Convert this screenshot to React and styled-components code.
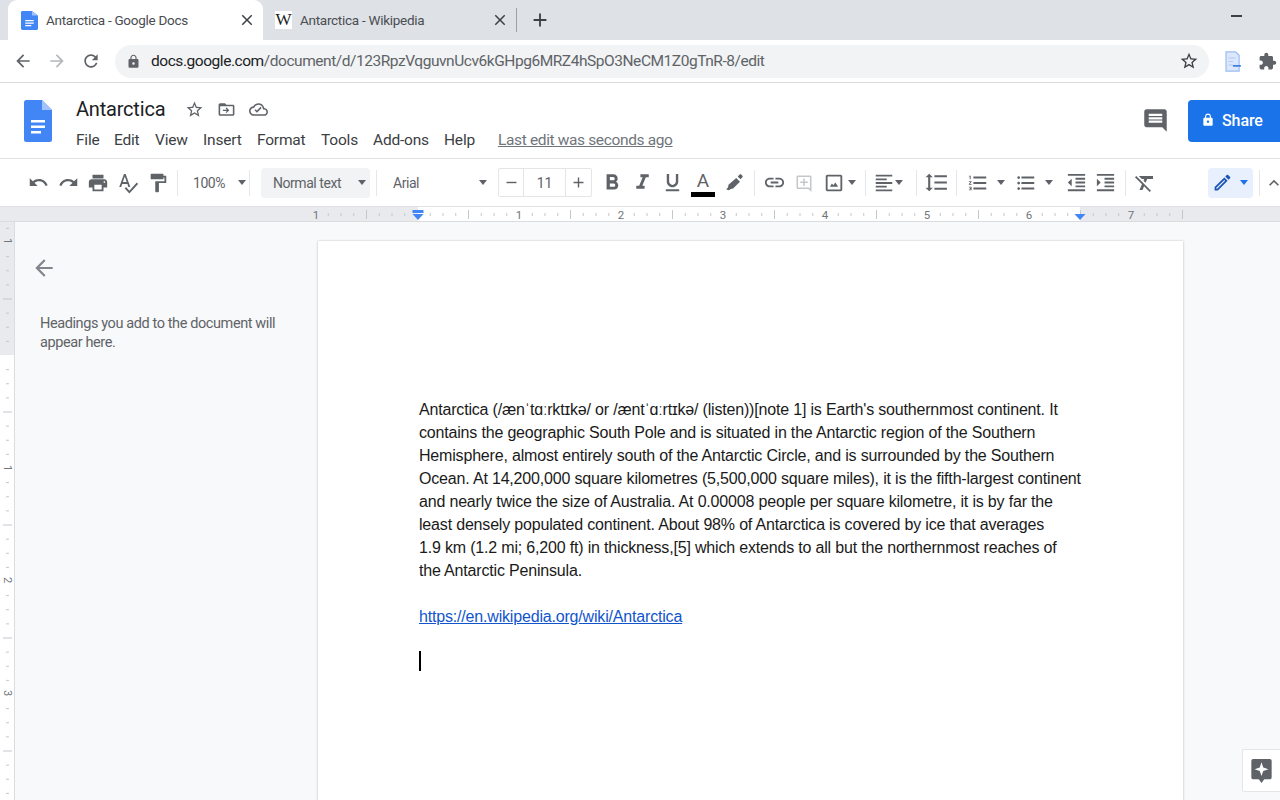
import React from 'react';
import styled, { createGlobalStyle } from 'styled-components';

/*-------------------- Icon paths --------------------*/

const paths = {
  back: 'M20 11H7.83l5.59-5.59L12 4l-8 8 8 8 1.41-1.41L7.83 13H20v-2z',
  forward: 'M12 4l-1.41 1.41L16.17 11H4v2h12.17l-5.58 5.59L12 20l8-8z',
  reload: 'M17.65 6.35C16.2 4.9 14.21 4 12 4c-4.42 0-7.99 3.58-7.99 8s3.57 8 7.99 8c3.73 0 6.84-2.55 7.73-6h-2.08c-.82 2.33-3.04 4-5.65 4-3.31 0-6-2.69-6-6s2.69-6 6-6c1.66 0 3.14.69 4.22 1.78L13 11h7V4l-2.35 2.35z',
  lock: 'M18 8h-1V6c0-2.76-2.24-5-5-5S7 3.24 7 6v2H6c-1.1 0-2 .9-2 2v10c0 1.1.9 2 2 2h12c1.1 0 2-.9 2-2V10c0-1.1-.9-2-2-2zm-6 9c-1.1 0-2-.9-2-2s.9-2 2-2 2 .9 2 2-.9 2-2 2zm3.1-9H8.9V6c0-1.71 1.39-3.1 3.1-3.1 1.71 0 3.1 1.39 3.1 3.1v2z',
  star: 'M22 9.24l-7.19-.62L12 2 9.19 8.63 2 9.24l5.46 4.73L5.82 21 12 17.27 18.18 21l-1.63-7.03L22 9.24zM12 15.4l-3.76 2.27 1-4.28-3.32-2.88 4.38-.38L12 6.1l1.71 4.04 4.38.38-3.32 2.88 1 4.28L12 15.4z',
  puzzle: 'M20.5 11H19V7c0-1.1-.9-2-2-2h-4V3.5C13 2.12 11.88 1 10.5 1S8 2.12 8 3.5V5H4c-1.1 0-1.99.9-1.99 2v3.8H3.5c1.49 0 2.7 1.21 2.7 2.7s-1.21 2.7-2.7 2.7H2V20c0 1.1.9 2 2 2h3.8v-1.5c0-1.49 1.21-2.7 2.7-2.7 1.49 0 2.7 1.21 2.7 2.7V22H17c1.1 0 2-.9 2-2v-4h1.5c1.38 0 2.5-1.12 2.5-2.5S21.88 11 20.5 11z',
  close: 'M19 6.41L17.59 5 12 10.59 6.41 5 5 6.41 10.59 12 5 17.59 6.41 19 12 13.41 17.59 19 19 17.59 13.41 12z',
  plus: 'M19 13h-6v6h-2v-6H5v-2h6V5h2v6h6v2z',
  minus: 'M19 13H5v-2h14v2z',
  folder: 'M20 6h-8l-2-2H4c-1.1 0-2 .9-2 2v12c0 1.1.9 2 2 2h16c1.1 0 2-.9 2-2V8c0-1.1-.9-2-2-2zm0 12H4V8h16v10zM12 9.5l-1.1 1.1 1.6 1.6H7.5v1.6h5l-1.6 1.6L12 16.5l3.5-3.5z',
  cloud: 'M19.35 10.04C18.67 6.59 15.64 4 12 4 9.11 4 6.6 5.64 5.35 8.04 2.34 8.36 0 10.91 0 14c0 3.31 2.69 6 6 6h13c2.76 0 5-2.24 5-5 0-2.64-2.05-4.78-4.65-4.96zM19 18H6c-2.21 0-4-1.79-4-4 0-2.05 1.53-3.76 3.56-3.97l1.07-.11.5-.95C8.08 7.14 9.94 6 12 6c2.62 0 4.88 1.86 5.39 4.43l.3 1.5 1.53.11c1.56.1 2.78 1.41 2.78 2.96 0 1.65-1.35 3-3 3zm-9-2l-3-3 1.41-1.41L10 13.17l4.59-4.58L16 10l-6 6z',
  comment: 'M21.99 4c0-1.1-.89-2-1.99-2H4c-1.1 0-2 .9-2 2v12c0 1.1.9 2 2 2h14l4 4-.01-18zM18 14H6v-2h12v2zm0-3H6V9h12v2zm0-3H6V6h12v2z',
  undo: 'M12.5 8c-2.65 0-5.05.99-6.9 2.6L2 7v9h9l-3.62-3.62c1.39-1.16 3.16-1.88 5.12-1.88 3.54 0 6.55 2.31 7.6 5.5l2.37-.78C21.08 11.03 17.15 8 12.5 8z',
  redo: 'M18.4 10.6C16.55 8.99 14.15 8 11.5 8c-4.65 0-8.58 3.03-9.96 7.22L3.9 16c1.05-3.19 4.05-5.5 7.6-5.5 1.95 0 3.73.72 5.12 1.88L13 16h9V7l-3.6 3.6z',
  print: 'M19 8H5c-1.66 0-3 1.34-3 3v6h4v4h12v-4h4v-6c0-1.66-1.34-3-3-3zm-3 11H8v-5h8v5zm3-7c-.55 0-1-.45-1-1s.45-1 1-1 1 .45 1 1-.45 1-1 1zm-1-9H6v4h12V3z',
  spell: 'M12.45 16h2.09L9.43 3H7.57L2.46 16h2.09l1.12-3h5.64l1.14 3zm-6.02-5L8.5 5.48 10.57 11H6.43zm15.16.59l-8.09 8.09L9.83 16l-1.41 1.41 5.09 5.09L23 13l-1.41-1.41z',
  paint: 'M18 4V3c0-.55-.45-1-1-1H5c-.55 0-1 .45-1 1v4c0 .55.45 1 1 1h12c.55 0 1-.45 1-1V6h1v4H9v11c0 .55.45 1 1 1h2c.55 0 1-.45 1-1v-9h8V4h-3z',
  bold: 'M15.6 10.79c.97-.67 1.65-1.77 1.65-2.79 0-2.26-1.75-4-4-4H7v14h7.04c2.09 0 3.71-1.7 3.71-3.79 0-1.52-.86-2.82-2.15-3.42zM10 6.5h3c.83 0 1.5.67 1.5 1.5s-.67 1.5-1.5 1.5h-3v-3zm3.5 9H10v-3h3.5c.83 0 1.5.67 1.5 1.5s-.67 1.5-1.5 1.5z',
  italic: 'M10 4v3h2.21l-3.42 8H6v3h8v-3h-2.21l3.42-8H18V4z',
  underline: 'M12 17c3.31 0 6-2.69 6-6V3h-2.5v8c0 1.93-1.57 3.5-3.5 3.5S8.5 12.93 8.5 11V3H6v8c0 3.31 2.69 6 6 6zm-7 2v2h14v-2H5z',
  marker: 'M14.5 6.5l4 4-7.5 7.5-2.5.5-2 1.5-3-1 2-2.5.5-2.5zM16 5l2.2-2.2c.5-.5 1.2-.5 1.7 0l1.3 1.3c.5.5.5 1.2 0 1.7L19 8z',
  link: 'M3.9 12c0-1.71 1.39-3.1 3.1-3.1h4V7H7c-2.76 0-5 2.24-5 5s2.24 5 5 5h4v-1.9H7c-1.71 0-3.1-1.39-3.1-3.1zM8 13h8v-2H8v2zm9-6h-4v1.9h4c1.71 0 3.1 1.39 3.1 3.1s-1.39 3.1-3.1 3.1h-4V17h4c2.76 0 5-2.24 5-5s-2.24-5-5-5z',
  addComment: 'M20 2H4c-1.1 0-2 .9-2 2v14c0 1.1.9 2 2 2h14l4 4V4c0-1.1-.9-2-2-2zm0 17.17L18.83 18H4V4h16v15.17zM13 6h-2v4H7v2h4v4h2v-4h4v-2h-4V6z',
  image: 'M19 3H5c-1.1 0-2 .9-2 2v14c0 1.1.9 2 2 2h14c1.1 0 2-.9 2-2V5c0-1.1-.9-2-2-2zm0 16H5V5h14v14zm-5.5-7.5l-2.25 2.9-1.5-1.8L7.5 16h9l-3-4.5z',
  alignLeft: 'M15 15H3v2h12v-2zm0-8H3v2h12V7zM3 13h18v-2H3v2zm0 8h18v-2H3v2zM3 3v2h18V3H3z',
  spacing: 'M6 7h2.5L5 3.5 1.5 7H4v10H1.5L5 20.5 8.5 17H6V7zm4-2v2h12V5H10zm0 14h12v-2H10v2zm0-6h12v-2H10v2z',
  numbered: 'M2 17h2v.5H3v1h1v.5H2v1h3v-4H2v1zm1-9h1V4H2v1h1v3zm-1 3h1.8L2 13.1v.9h3v-1H3.2L5 10.9V10H2v1zm5-6v2h14V5H7zm0 14h14v-2H7v2zm0-6h14v-2H7v2z',
  bulleted: 'M4 10.5c-.83 0-1.5.67-1.5 1.5s.67 1.5 1.5 1.5 1.5-.67 1.5-1.5-.67-1.5-1.5-1.5zm0-6c-.83 0-1.5.67-1.5 1.5S3.17 7.5 4 7.5 5.5 6.83 5.5 6 4.83 4.5 4 4.5zm0 12c-.83 0-1.5.68-1.5 1.5s.68 1.5 1.5 1.5 1.5-.68 1.5-1.5-.67-1.5-1.5-1.5zM7 19h14v-2H7v2zm0-6h14v-2H7v2zm0-8v2h14V5H7z',
  outdent: 'M11 17h10v-2H11v2zm-8-5l4 4V8l-4 4zm0 9h18v-2H3v2zM3 3v2h18V3H3zm8 6h10V7H11v2zm0 4h10v-2H11v2z',
  indent: 'M3 21h18v-2H3v2zM3 8v8l4-4-4-4zm8 9h10v-2H11v2zM3 3v2h18V3H3zm8 6h10V7H11v2zm0 4h10v-2H11v2z',
  clear: 'M3.27 5L2 6.27l6.97 6.97L6.5 19h3l1.57-3.66L16.73 21 18 19.73 3.55 5.27 3.27 5zM6 5v.18L8.82 8h2.4l-.72 1.68 2.1 2.1L14.21 8H20V5H6z',
  pencil: 'M3 17.25V21h3.75L17.81 9.94l-3.75-3.75L3 17.25zM5.92 19H5v-.92l9.06-9.06.92.92L5.92 19zM20.71 5.63l-2.34-2.34c-.2-.2-.45-.29-.71-.29s-.51.1-.7.29l-1.83 1.83 3.75 3.75 1.83-1.83c.39-.39.39-1.02 0-1.41z',
  chevron: 'M12 8l-6 6 1.41 1.41L12 10.83l4.59 4.58L18 14z',
};

/*-------------------- Styled Components --------------------*/

const GlobalStyle = createGlobalStyle`
  html, body {
    margin: 0;
    padding: 0;
    background: white;
    overflow: hidden;
  }
  * {
    box-sizing: border-box;
  }
`;

const Page = styled.div`
  position: relative;
  width: 1280px;
  height: 800px;
  display: flex;
  flex-direction: column;
  overflow: hidden;
  font-family: "Roboto", sans-serif;
  color: #3c4043;
`;

const Svg = styled.svg`
  display: block;
  flex: none;
  width: ${p => p.$w}px;
  height: ${p => p.$h || p.$w}px;
  fill: ${p => p.$c || '#5f6368'};
`;

const Icon = ({ name, size = 20, color, h }) => (
  <Svg viewBox="0 0 24 24" $w={size} $h={h} $c={color} preserveAspectRatio="none">
    <path d={paths[name]} />
  </Svg>
);

/* browser tabs */
const TabStrip = styled.div`
  height: 40px;
  flex: none;
  display: flex;
  align-items: center;
  padding-left: 8px;
  background: #dee1e6;
`;

const Tab = styled.div`
  width: ${p => p.$w}px;
  height: 40px;
  display: flex;
  align-items: center;
  padding-left: ${p => p.$pad}px;
  background: ${p => (p.$active ? 'white' : 'transparent')};
  border-radius: 9px 9px 0 0;
`;

const TabTitle = styled.span`
  margin-left: 8px;
  width: ${p => p.$w}px;
  font-size: 13.5px;
  letter-spacing: -0.28px;
  color: #4a4d51;
  white-space: nowrap;
`;

const WikiBadge = styled.span`
  width: 17px;
  height: 18px;
  display: flex;
  align-items: center;
  justify-content: center;
  background: white;
  font-family: "Liberation Serif", serif;
  font-size: 17px;
  color: #202124;
`;

const StripDivider = styled.div`
  width: 1px;
  height: 24px;
  margin-left: 5px;
  background: #9aa0a6;
`;

const NewTab = styled.div`
  margin-left: 12px;
`;

const WindowMin = styled.div`
  width: 11px;
  height: 1.5px;
  margin: -8px 38px 0 auto;
  background: #3c4043;
`;

/* address bar */
const NavBar = styled.div`
  height: 43px;
  flex: none;
  display: flex;
  align-items: center;
  padding: 0 3px 0 13px;
  border-bottom: 1px solid #dadce0;
  background: white;
`;

const NavButton = styled.div`
  width: 20px;
  margin-right: ${p => p.$mr ?? 14}px;
`;

const Omnibox = styled.div`
  width: 1094px;
  height: 33px;
  display: flex;
  align-items: center;
  padding: 0 10px 0 11px;
  border-radius: 17px;
  background: #f1f3f4;
`;

const UrlText = styled.div`
  margin-left: 10px;
  font-size: 15.5px;
  letter-spacing: -0.45px;
  color: #5f6368;
  white-space: nowrap;
`;

const UrlHost = styled.span`
  color: #202124;
`;

const OmniStar = styled.div`
  margin-left: auto;
`;

const ExtSlot = styled.div`
  margin-left: ${p => p.$ml}px;
`;

/* docs title + menus */
const DocHeader = styled.div`
  height: 76px;
  flex: none;
  display: flex;
  padding: 17px 0 0 24px;
  border-bottom: 1px solid #e0e2e5;
  background: white;
`;

const DocInfo = styled.div`
  margin-left: 24px;
  display: flex;
  flex-direction: column;
  margin-top: -1px;
`;

const TitleRow = styled.div`
  height: 20px;
  display: flex;
  align-items: center;
`;

const DocTitle = styled.span`
  width: 109px;
  font-size: 20px;
  letter-spacing: -0.2px;
  color: #202124;
`;

const TitleIcon = styled.div`
  width: 32px;
`;

const MenuRow = styled.div`
  display: flex;
  align-items: center;
  margin-top: 12px;
`;

const MenuItem = styled.span`
  width: ${p => p.$w}px;
  font-size: 15.5px;
  letter-spacing: -0.2px;
  color: #3c4043;
`;

const LastEdit = styled.span`
  font-size: 15.5px;
  letter-spacing: -0.36px;
  color: #70757a;
  text-decoration: underline;
`;

const HeaderRight = styled.div`
  margin-left: auto;
  display: flex;
  align-items: flex-start;
`;

const CommentSlot = styled.div`
  margin: 7px 19px 0 0;
`;

const ShareButton = styled.div`
  width: 92px;
  height: 42px;
  display: flex;
  align-items: center;
  padding: 0 0 2px 13px;
  gap: 7px;
  border-radius: 4px 0 0 4px;
  background: #1a73e8;
  color: white;
  font-size: 16px;
  font-weight: 500;
  letter-spacing: -0.1px;
`;

/* formatting toolbar */
const Toolbar = styled.div`
  height: 47px;
  flex: none;
  display: flex;
  align-items: center;
  padding-left: 23px;
  background: white;
  white-space: nowrap;
`;

const Slot = styled.div`
  width: ${p => p.$w || 30}px;
  flex: none;
  display: flex;
  align-items: center;
  justify-content: center;
  margin-left: ${p => p.$ml || 0}px;
`;

const Sep = styled.div`
  width: 1px;
  height: 26px;
  flex: none;
  margin-left: ${p => p.$ml || 0}px;
  background: #e5e7ea;
`;

const Caret = styled.span`
  width: 0;
  height: 0;
  flex: none;
  margin-left: ${p => p.$ml || 0}px;
  border-left: 4.5px solid transparent;
  border-right: 4.5px solid transparent;
  border-top: 5px solid ${p => p.$c || '#5f6368'};
`;

const Select = styled.div`
  width: ${p => p.$w}px;
  height: 30px;
  flex: none;
  display: flex;
  align-items: center;
  justify-content: space-between;
  margin-left: ${p => p.$ml || 0}px;
  padding: 0 ${p => p.$pr}px 0 ${p => p.$pl}px;
  border-radius: 4px;
  background: ${p => (p.$fill ? '#f1f3f4' : 'transparent')};
  font-size: 14px;
  letter-spacing: -0.45px;
  color: #5f6368;
`;

const SizeBox = styled.div`
  width: 94px;
  height: 29px;
  flex: none;
  display: grid;
  grid-template-columns: 25px 1fr 26px;
  align-items: center;
  justify-items: center;
  margin-left: 6px;
  border: 1px solid #e3e5e8;
  border-radius: 2px;
  font-size: 14px;
  color: #5f6368;
`;

const SizeCell = styled.div`
  width: 100%;
  height: 100%;
  display: flex;
  align-items: center;
  justify-content: center;
  border-left: ${p => (p.$divided ? '1px solid #e3e5e8' : 'none')};
  border-right: ${p => (p.$dividedRight ? '1px solid #e3e5e8' : 'none')};
`;

const TextColor = styled.div`
  display: flex;
  flex-direction: column;
  align-items: center;
  margin-top: 3px;
  color: #5f6368;
  font-size: 19px;
  line-height: 20px;
`;

const ColorBar = styled.div`
  width: 24px;
  height: 5px;
  margin-top: 1px;
  background: black;
`;

const EditMode = styled.div`
  width: 45px;
  height: 30px;
  flex: none;
  display: flex;
  align-items: center;
  padding-left: 4px;
  margin-left: 48px;
  gap: 7px;
  border-radius: 4px;
  background: #e8f0fe;
`;

/* rulers */
const RulerBar = styled.div`
  height: 16px;
  flex: none;
  border-top: 1px solid #e0e2e5;
  border-bottom: 1px solid #dadce0;
`;

const Workspace = styled.div`
  flex: 1;
  min-height: 0;
  display: flex;
  background: #f8f9fa;
`;

const SideRuler = styled.div`
  width: 15px;
  flex: none;
  border-right: 1px solid #dadce0;
  background: white;
`;

const Outline = styled.div`
  width: 303px;
  flex: none;
  padding: 33px 0 0 16px;
`;

const OutlineHint = styled.p`
  width: 250px;
  margin: 33px 0 0 9px;
  font-size: 14.5px;
  line-height: 19px;
  letter-spacing: -0.4px;
  color: #5f6368;
`;

/* the document page */
const Sheet = styled.div`
  width: 865px;
  height: 600px;
  flex: none;
  margin-top: 19px;
  padding: 157px 0 0 101px;
  background: white;
  box-shadow: 0 0 2px rgba(60, 64, 67, 0.25), 0 1px 3px rgba(60, 64, 67, 0.12);
  font-family: "Liberation Sans", Arial, sans-serif;
  font-size: 16px;
  line-height: 23px;
  letter-spacing: -0.18px;
  color: #1a1a1a;
`;

const Line = styled.div`
  height: 23px;
  white-space: nowrap;
`;

const DocLink = styled.span`
  color: #1155cc;
  text-decoration: underline;
`;

const Cursor = styled.div`
  width: 2px;
  height: 20px;
  background: black;
`;

const FeedbackTab = styled.div`
  position: absolute;
  right: 0;
  bottom: 8px;
  width: 38px;
  height: 43px;
  display: flex;
  align-items: center;
  padding-left: 8px;
  border: 1px solid #e3e5e8;
  border-right: none;
  border-radius: 2px 0 0 2px;
  background: white;
`;

/*-------------------- Drawings --------------------*/

const DocsGlyph = ({ w, h }) => (
  <Svg viewBox="0 0 28 42" $w={w} $h={h} $c="#4285f4" preserveAspectRatio="none">
    <path d="M2.5 0H18l10 10v29.5a2.5 2.5 0 0 1-2.5 2.5h-23A2.5 2.5 0 0 1 0 39.5v-37A2.5 2.5 0 0 1 2.5 0z" />
    <path d="M18 0l10 10H18z" fill="#a1c2fa" />
    <path d="M7 20h14v2.6H7zM7 25.5h14v2.6H7zM7 31h10v2.6H7z" fill="white" />
  </Svg>
);

const ExtensionGlyph = () => (
  <Svg viewBox="0 0 20 24" $w={18} $h={21} $c="none">
    <path d="M2 1h11l4 4v18H2z" fill="#dbe7fb" stroke="#9dbdf2" strokeWidth="1.4" />
    <path d="M5 8h8M5 12h5M5 16h5" stroke="#b0c9f5" strokeWidth="1.4" />
    <path d="M10 17h9" stroke="#3f7fe6" strokeWidth="2" />
  </Svg>
);

const FeedbackGlyph = () => (
  <Svg viewBox="0 0 22 26" $w={21} $h={24} $c="#5f6368">
    <path d="M2 0h18a2 2 0 0 1 2 2v18a2 2 0 0 1-2 2h-6l-3 4-3-4H2a2 2 0 0 1-2-2V2a2 2 0 0 1 2-2z" />
    <path d="M11 3.5l1.9 5.6 5.6 1.9-5.6 1.9-1.9 5.6-1.9-5.6-5.6-1.9 5.6-1.9z" fill="white" />
  </Svg>
);

const inch = 102;
const rulerOrigin = 417.5;

function TopRuler() {
  const ticks = [];
  for (let i = -8; i <= 60; i++) {
    const x = rulerOrigin + (i * inch) / 8;
    if (x > 1183.5 || i % 8 === 0) continue;
    const half = i % 4 === 0;
    ticks.push(
      <line key={i} x1={x} x2={x} y1={half ? 3 : 6} y2={half ? 12 : 9} stroke="#c4c7cb" strokeWidth="1" />
    );
  }
  const labels = [[316, 1], [519, 1], [621, 2], [723, 3], [825, 4], [927, 5], [1029, 6], [1131, 7]];
  return (
    <svg width="1280" height="14" style={{ display: 'block' }}>
      <rect width="1280" height="14" fill="#e8eaed" />
      <rect x="418" width="662" height="14" fill="white" />
      {ticks}
      {labels.map(([x, n]) => (
        <text key={x} x={x} y="11.5" textAnchor="middle" fontFamily="Roboto, sans-serif" fontSize="11.5" fill="#70757a">
          {n}
        </text>
      ))}
      <path d="M412.5 3h11v3h-11z" fill="#4285f4" />
      <path d="M412.5 7h11L418 13z" fill="#4285f4" />
      <path d="M1074.5 7h11L1080 13z" fill="#4285f4" />
    </svg>
  );
}

function LeftRuler() {
  const ticks = [];
  for (let i = -9; i <= 32; i++) {
    const y = 133 + (i * 113) / 8 + 0.5;
    if (i % 8 === 0) continue;
    const half = i % 4 === 0;
    ticks.push(
      <line key={i} x1={half ? 3 : 6} x2={half ? 12 : 9} y1={y} y2={y} stroke="#c4c7cb" strokeWidth="1" />
    );
  }
  const labels = [[19, 1], [246, 1], [358, 2], [471, 3]];
  return (
    <svg width="14" height="578" style={{ display: 'block' }}>
      <rect width="14" height="133" fill="#e8eaed" />
      {ticks}
      {labels.map(([y, n]) => (
        <text
          key={y}
          x="7"
          y={y}
          transform={`rotate(90 7 ${y})`}
          textAnchor="middle"
          dominantBaseline="central"
          fontFamily="Roboto, sans-serif"
          fontSize="11"
          fill="#70757a"
        >
          {n}
        </text>
      ))}
    </svg>
  );
}

/*-------------------- Functional Component --------------------*/

const bodyLines = [
  'Antarctica (/ænˈtɑːrktɪkə/ or /æntˈɑːrtɪkə/ (listen))[note 1] is Earth\'s southernmost continent. It',
  'contains the geographic South Pole and is situated in the Antarctic region of the Southern',
  'Hemisphere, almost entirely south of the Antarctic Circle, and is surrounded by the Southern',
  'Ocean. At 14,200,000 square kilometres (5,500,000 square miles), it is the fifth-largest continent',
  'and nearly twice the size of Australia. At 0.00008 people per square kilometre, it is by far the',
  'least densely populated continent. About 98% of Antarctica is covered by ice that averages',
  '1.9 km (1.2 mi; 6,200 ft) in thickness,[5] which extends to all but the northernmost reaches of',
  'the Antarctic Peninsula.',
];

const menus = [['File', 38], ['Edit', 41], ['View', 48], ['Insert', 54], ['Format', 64], ['Tools', 52], ['Add-ons', 71], ['Help', 54]];

function App() {
  return (
    <Page>
      <GlobalStyle />
      <TabStrip>
        <Tab $active $w={255} $pad={13}>
          <DocsGlyph w={17} h={19} />
          <TabTitle $w={192}>Antarctica - Google Docs</TabTitle>
          <Icon name="close" size={18} color="#3c4043" />
        </Tab>
        <Tab $w={248} $pad={12}>
          <WikiBadge>W</WikiBadge>
          <TabTitle $w={191}>Antarctica - Wikipedia</TabTitle>
          <Icon name="close" size={18} color="#3c4043" />
        </Tab>
        <StripDivider />
        <NewTab><Icon name="plus" size={22} color="#3c4043" /></NewTab>
        <WindowMin />
      </TabStrip>

      <NavBar>
        <NavButton><Icon name="back" size={20} color="#5f6368" /></NavButton>
        <NavButton><Icon name="forward" size={20} color="#b4b7bb" /></NavButton>
        <NavButton $mr={0}><Icon name="reload" size={20} color="#5f6368" /></NavButton>
        <ExtSlot $ml={14}>
          <Omnibox>
            <Icon name="lock" size={15} color="#5f6368" />
            <UrlText><UrlHost>docs.google.com</UrlHost>/document/d/123RpzVqguvnUcv6kGHpg6MRZ4hSpO3NeCM1Z0gTnR-8/edit</UrlText>
            <OmniStar><Icon name="star" size={20} color="#3c4043" /></OmniStar>
          </Omnibox>
        </ExtSlot>
        <ExtSlot $ml={15}><ExtensionGlyph /></ExtSlot>
        <ExtSlot $ml={16}><Icon name="puzzle" size={19} color="#5f6368" /></ExtSlot>
      </NavBar>

      <DocHeader>
        <DocsGlyph w={28} h={42} />
        <DocInfo>
          <TitleRow>
            <DocTitle>Antarctica</DocTitle>
            <TitleIcon><Icon name="star" size={19} color="#5f6368" /></TitleIcon>
            <TitleIcon><Icon name="folder" size={19} color="#5f6368" /></TitleIcon>
            <TitleIcon><Icon name="cloud" size={19} color="#5f6368" /></TitleIcon>
          </TitleRow>
          <MenuRow>
            {menus.map(([label, w]) => (
              <MenuItem key={label} $w={w}>{label}</MenuItem>
            ))}
            <LastEdit>Last edit was seconds ago</LastEdit>
          </MenuRow>
        </DocInfo>
        <HeaderRight>
          <CommentSlot><Icon name="comment" size={27} color="#5f6368" /></CommentSlot>
          <ShareButton>
            <Icon name="lock" size={14} color="white" />
            Share
          </ShareButton>
        </HeaderRight>
      </DocHeader>

      <Toolbar>
        <Slot><Icon name="undo" size={21} /></Slot>
        <Slot><Icon name="redo" size={21} /></Slot>
        <Slot><Icon name="print" size={22} /></Slot>
        <Slot><Icon name="spell" size={22} h={24} /></Slot>
        <Slot><Icon name="paint" size={22} /></Slot>
        <Sep $ml={4} />
        <Select $w={71} $pl={15} $pr={3}>100%<Caret /></Select>
        <Sep />
        <Select $w={109} $ml={11} $pl={12} $pr={4} $fill>Normal text<Caret /></Select>
        <Sep $ml={6} />
        <Select $w={115} $pl={16} $pr={5}>Arial<Caret /></Select>
        <SizeBox>
          <SizeCell $dividedRight><Icon name="minus" size={17} /></SizeCell>
          <span>11</span>
          <SizeCell $divided><Icon name="plus" size={17} /></SizeCell>
        </SizeBox>
        <Slot $ml={5}><Icon name="bold" size={26} /></Slot>
        <Slot><Icon name="italic" size={25} /></Slot>
        <Slot><Icon name="underline" size={23} /></Slot>
        <Slot $w={32}>
          <TextColor>A<ColorBar /></TextColor>
        </Slot>
        <Slot><Icon name="marker" size={22} /></Slot>
        <Sep $ml={5} />
        <Slot $ml={4}><Icon name="link" size={23} /></Slot>
        <Slot><Icon name="addComment" size={18} color="#c4c7ca" /></Slot>
        <Slot $w={41}>
          <Icon name="image" size={22} />
          <Caret $ml={3} />
        </Slot>
        <Sep $ml={5} />
        <Slot $w={44}>
          <Icon name="alignLeft" size={22} />
          <Caret $ml={0} />
        </Slot>
        <Sep $ml={6} />
        <Slot $ml={4}><Icon name="spacing" size={25} /></Slot>
        <Sep $ml={5} />
        <Slot $w={48} $ml={5}>
          <Icon name="numbered" size={22} />
          <Caret $ml={8} />
        </Slot>
        <Slot $w={48}>
          <Icon name="bulleted" size={22} />
          <Caret $ml={8} />
        </Slot>
        <Slot $ml={3}><Icon name="outdent" size={23} /></Slot>
        <Slot $w={29}><Icon name="indent" size={23} /></Slot>
        <Sep $ml={5} />
        <Slot $ml={4}><Icon name="clear" size={24} /></Slot>
        <EditMode>
          <Icon name="pencil" size={21} color="#1a55b5" />
          <Caret $c="#1a73e8" />
        </EditMode>
        <Sep $ml={6} />
        <Slot $w={20} $ml={4}><Icon name="chevron" size={20} /></Slot>
      </Toolbar>

      <RulerBar><TopRuler /></RulerBar>

      <Workspace>
        <SideRuler><LeftRuler /></SideRuler>
        <Outline>
          <Icon name="back" size={26} color="#80868b" />
          <OutlineHint>Headings you add to the document will appear here.</OutlineHint>
        </Outline>
        <Sheet>
          {bodyLines.map(line => (
            <Line key={line}>{line}</Line>
          ))}
          <Line />
          <Line><DocLink>https://en.wikipedia.org/wiki/Antarctica</DocLink></Line>
          <Line />
          <Cursor />
        </Sheet>
      </Workspace>

      <FeedbackTab><FeedbackGlyph /></FeedbackTab>
    </Page>
  );
}

export default App;
